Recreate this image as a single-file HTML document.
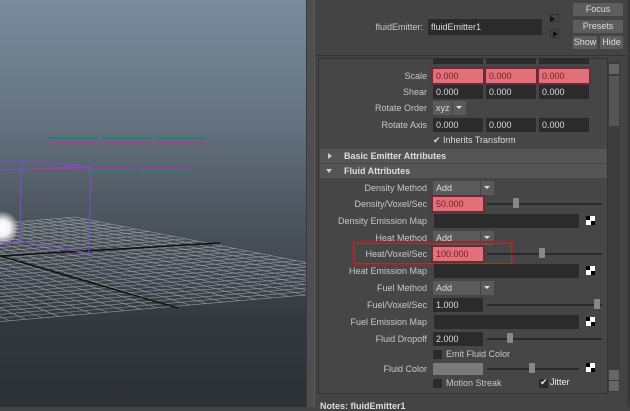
<!DOCTYPE html>
<html><head><meta charset="utf-8"><style>
*{margin:0;padding:0;box-sizing:border-box}
body{width:630px;height:407px;overflow:hidden;background:#444;font-family:"Liberation Sans",sans-serif;font-size:9px;color:#c8c8c8;position:relative}
.a{position:absolute}
#vp{left:0;top:0;width:306px;height:407px;background:linear-gradient(#7b8b9b 0%,#64727f 30%,#4b535c 55%,#33383e 80%,#2d3136 100%)}
.lbl{position:absolute;text-align:right;width:200px;left:227px;line-height:14px}
.f{position:absolute;height:14px;background:#2b2b2b;line-height:14px;padding-left:3px;color:#ddd}
.r{background:#e2707a;color:#7a1c24;box-shadow:0 0 0 2px #6a2a3a}
.dd{position:absolute;height:14px;background:#5a5a5a;line-height:14px;padding-left:3px;color:#ddd}
.dd:after{content:"";position:absolute;right:0;top:0;width:13px;height:14px;border-left:1px solid #444;background:#5a5a5a}
.dd i{position:absolute;right:4px;top:5px;border:3px solid transparent;border-top:3px solid #ddd;z-index:2}
.sl{position:absolute;height:2px;background:#2a2a2a;}
.kn{position:absolute;width:6px;height:10px;background:#888;border-radius:1px}
.ck{position:absolute;width:9px;height:9px;background:#fff}
.ck:before,.ck:after{content:"";position:absolute;width:4px;height:4px;background:#000}
.ck:before{left:0;top:0}.ck:after{right:0;bottom:0}
.btn{position:absolute;background:#5d5d5d;color:#ddd;text-align:center;line-height:13px;height:13px;border-radius:1px}
.cb{position:absolute;width:9px;height:9px;background:#2b2b2b}
.hdr{position:absolute;left:320px;width:287px;height:14px;background:#555;font-weight:bold;line-height:14px;padding-left:24px;color:#ddd}
</style></head><body>
<div id="vp" class="a"></div>
<svg class="a" style="left:0;top:0" width="306" height="407" id="sv">
<defs><radialGradient id="gl"><stop offset="0" stop-color="#fff"/><stop offset=".45" stop-color="#f4f4f4"/><stop offset="1" stop-color="#fff" stop-opacity="0"/></radialGradient></defs>
<g id="grid" stroke="#aab0b6" stroke-width="0.6" opacity=".8"></g>
<line x1="0" y1="256" x2="220" y2="243" stroke="#111" stroke-width="1.5"/>
<line x1="0" y1="256" x2="178" y2="308" stroke="#111" stroke-width="1.5"/>
<circle cx="2" cy="228" r="17" fill="url(#gl)"/>
<g stroke="#7a50c8" fill="none" stroke-width="1">
<path d="M0 162 L21 160 L91 167 L89 253 L18 241 L0 245"/><path d="M21 160 L20 240"/><path d="M0 170 L91 167"/>
</g>
<g stroke="#2a8070" stroke-width="2"><line x1="48" y1="138" x2="98" y2="138"/><line x1="102" y1="138" x2="152" y2="138"/><line x1="157" y1="138" x2="206" y2="138"/><line x1="88" y1="172" x2="136" y2="172"/><line x1="140" y1="172" x2="190" y2="172"/></g>
<g stroke="#a04090" stroke-width="1.5"><line x1="50" y1="143" x2="98" y2="143"/><line x1="103" y1="143" x2="152" y2="143"/><line x1="157" y1="143" x2="206" y2="143"/><line x1="34" y1="169" x2="82" y2="169"/><line x1="88" y1="169" x2="136" y2="169"/><line x1="141" y1="169" x2="190" y2="169"/></g>
</svg>
<script>
(function(){var g=document.getElementById('grid'),s='';
var F=[75,217],R=[420,285],N=[-40,325],L=[-200,240],n=28;
function lp(a,b,t){return[a[0]+(b[0]-a[0])*t,a[1]+(b[1]-a[1])*t]}
for(var i=0;i<=n;i++){var t=i/n,p=lp(F,R,t),q=lp(L,N,t);s+='<line x1="'+p[0]+'" y1="'+p[1]+'" x2="'+q[0]+'" y2="'+q[1]+'"/>';
p=lp(F,L,t);q=lp(R,N,t);s+='<line x1="'+p[0]+'" y1="'+p[1]+'" x2="'+q[0]+'" y2="'+q[1]+'"/>';}
g.innerHTML=s;})();
</script>
<div class="a" style="left:306px;top:0;width:9px;height:407px;background:#4e4e4e;border-left:1px solid #3a3a3a;border-right:1px solid #5a5a5a"></div>
<div class="a" style="left:627px;top:0;width:3px;height:407px;background:#3a3a3a"></div>

<div class="lbl" style="left:223px;top:20px">fluidEmitter:</div>
<div class="f" style="left:428px;top:19px;width:114px;height:16px;line-height:16px">fluidEmitter1</div>
<div class="a" style="left:550px;top:14px;width:9px;height:8px;border:1px dotted #222"><div class="a" style="left:-1px;top:1px;border:3px solid transparent;border-left:5px solid #111"></div></div>
<div class="a" style="left:550px;top:29px;width:9px;height:9px;border:1px dotted #222"><div class="a" style="left:2px;top:1px;border:3px solid transparent;border-left:5px solid #111"></div></div>
<div class="btn" style="left:573px;top:3px;width:50px">Focus</div>
<div class="btn" style="left:573px;top:20px;width:50px">Presets</div>
<div class="btn" style="left:573px;top:36px;width:24px">Show</div>
<div class="btn" style="left:600px;top:36px;width:23px">Hide</div>

<div class="a" style="left:316px;top:55px;width:310px;height:1px;background:#333"></div>
<div class="a" style="left:318px;top:58px;width:290px;height:336px;border:1px solid #333;background:#464646"></div>
<div class="a" style="left:608px;top:62px;width:12px;height:330px;background:#3c3c3c"></div>
<div class="a" style="left:609px;top:64px;width:10px;height:10px;background:#666"></div>
<div class="a" style="left:609px;top:76px;width:10px;height:50px;background:#555"></div>
<div class="a" style="left:609px;top:370px;width:10px;height:10px;background:#666"></div>
<div class="a" style="left:609px;top:381px;width:10px;height:10px;background:#666"></div>

<div class="f" style="left:433px;top:58px;width:50px;height:6px"></div><div class="f" style="left:486px;top:58px;width:50px;height:6px"></div><div class="f" style="left:539px;top:58px;width:50px;height:6px"></div>
<div class="lbl" style="top:69px">Scale</div>
<div class="f r" style="left:433px;top:69px;width:50px">0.000</div><div class="f r" style="left:486px;top:69px;width:50px">0.000</div><div class="f r" style="left:539px;top:69px;width:50px">0.000</div>
<div class="lbl" style="top:85px">Shear</div>
<div class="f" style="left:433px;top:85px;width:50px">0.000</div><div class="f" style="left:486px;top:85px;width:50px">0.000</div><div class="f" style="left:539px;top:85px;width:50px">0.000</div>
<div class="lbl" style="top:101px">Rotate Order</div>
<div class="dd" style="left:433px;top:101px;width:33px">xyz<i></i></div>
<div class="lbl" style="top:118px">Rotate Axis</div>
<div class="f" style="left:433px;top:118px;width:50px">0.000</div><div class="f" style="left:486px;top:118px;width:50px">0.000</div><div class="f" style="left:539px;top:118px;width:50px">0.000</div>
<div class="a" style="left:433px;top:134px;line-height:12px;color:#ddd">✔ Inherits Transform</div>
<div class="hdr" style="top:149px">Basic Emitter Attributes</div>
<div class="a" style="left:328px;top:153px;border:3px solid transparent;border-left:4px solid #ccc"></div>
<div class="hdr" style="top:164px">Fluid Attributes</div>
<div class="a" style="left:326px;top:169px;border:3px solid transparent;border-top:4px solid #ccc"></div>

<div class="lbl" style="top:181px">Density Method</div><div class="dd" style="left:433px;top:181px;width:61px">Add<i></i></div>
<div class="lbl" style="top:197px">Density/Voxel/Sec</div><div class="f r" style="left:433px;top:197px;width:50px">50.000</div>
<div class="sl" style="left:487px;top:203px;width:115px"></div><div class="kn" style="left:513px;top:198px"></div>
<div class="lbl" style="top:214px">Density Emission Map</div><div class="f" style="left:434px;top:214px;width:145px"></div><div class="ck" style="left:586px;top:216px"></div>
<div class="lbl" style="top:231px">Heat Method</div><div class="dd" style="left:433px;top:231px;width:61px">Add<i></i></div>
<div class="a" style="left:352px;top:241px;width:162px;height:25px;border:2px solid #8a2a3a;box-shadow:inset 0 0 0 1px #7a4a20"></div>
<div class="lbl" style="top:247px">Heat/Voxel/Sec</div><div class="f r" style="left:433px;top:247px;width:50px">100.000</div>
<div class="sl" style="left:487px;top:253px;width:115px"></div><div class="kn" style="left:539px;top:248px"></div>
<div class="lbl" style="top:264px">Heat Emission Map</div><div class="f" style="left:434px;top:264px;width:145px"></div><div class="ck" style="left:586px;top:266px"></div>
<div class="lbl" style="top:281px">Fuel Method</div><div class="dd" style="left:433px;top:281px;width:61px">Add<i></i></div>
<div class="lbl" style="top:298px">Fuel/Voxel/Sec</div><div class="f" style="left:433px;top:298px;width:50px">1.000</div>
<div class="sl" style="left:487px;top:304px;width:115px"></div><div class="kn" style="left:594px;top:299px"></div>
<div class="lbl" style="top:315px">Fuel Emission Map</div><div class="f" style="left:434px;top:315px;width:145px"></div><div class="ck" style="left:586px;top:317px"></div>
<div class="lbl" style="top:332px">Fluid Dropoff</div><div class="f" style="left:433px;top:332px;width:50px">2.000</div>
<div class="sl" style="left:487px;top:338px;width:115px"></div><div class="kn" style="left:507px;top:333px"></div>
<div class="cb" style="left:433px;top:350px"></div><div class="a" style="left:446px;top:348px;line-height:12px">Emit Fluid Color</div>
<div class="lbl" style="top:362px">Fluid Color</div><div class="a" style="left:433px;top:363px;width:50px;height:12px;background:#7a7a7a"></div>
<div class="sl" style="left:487px;top:368px;width:92px"></div><div class="kn" style="left:529px;top:363px"></div><div class="ck" style="left:586px;top:363px"></div>
<div class="cb" style="left:433px;top:379px"></div><div class="a" style="left:446px;top:377px;line-height:12px">Motion Streak</div>
<div class="cb" style="left:539px;top:379px"></div><div class="a" style="left:540px;top:376px;line-height:12px;color:#eee">✔ Jitter</div>
<div class="a" style="left:320px;top:402px;font-weight:bold;color:#ddd;line-height:9px">Notes:  fluidEmitter1</div>
</body></html>
